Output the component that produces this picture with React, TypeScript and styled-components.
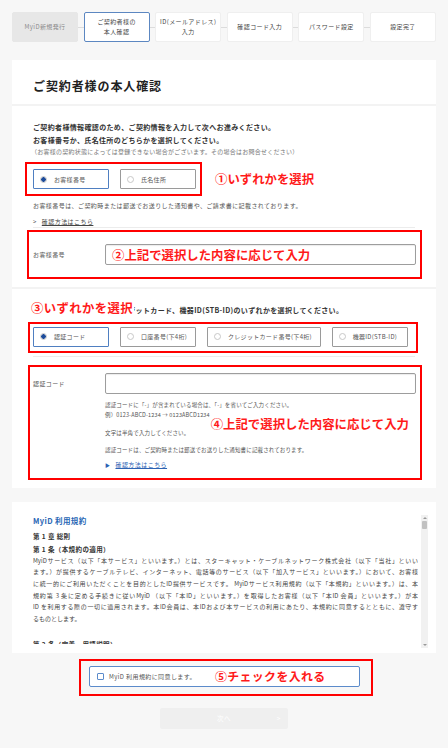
import React from "react";
import styled, { createGlobalStyle } from "styled-components";

const GlobalStyle = createGlobalStyle`
  html, body { margin: 0; padding: 0; background: #f7f7f7; }
  body {
    font-family: "Noto Sans CJK JP", "Noto Sans", sans-serif;
    color: #333;
    -webkit-font-smoothing: antialiased;
  }
  * { box-sizing: border-box; }
`;

const Page = styled.div`
  width: 448px;
  padding: 12px 12px 20px;
`;

/* ---------- stepper ---------- */

const Stepper = styled.ol`
  display: flex;
  align-items: center;
  height: 30px;
  margin: 0;
  padding: 0;
  list-style: none;
`;

type StepState = "done" | "current" | "todo";

const Step = styled.li<{ $state: StepState }>`
  flex: 1;
  height: 30px;
  display: flex;
  align-items: center;
  justify-content: center;
  text-align: center;
  font-size: 6px;
  line-height: 10.5px;
  letter-spacing: 0.4px;
  border-radius: 2px;
  background: ${(p) => (p.$state === "done" ? "#e7e7e7" : "#fff")};
  color: ${(p) => (p.$state === "done" ? "#8c8c8c" : "#444")};
  border: 1px solid
    ${(p) =>
      p.$state === "current" ? "#5c87c1" : p.$state === "done" ? "#e7e7e7" : "#efefef"};
`;

const Connector = styled.span`
  flex: none;
  width: 5.5px;
  height: 1px;
  background: #dcdcdc;
`;

/* ---------- main card ---------- */

const Card = styled.section`
  margin-top: 18px;
  background: #fff;
`;

const CardHeader = styled.header`
  height: 46px;
  padding: 18px 21px 0;
  border-bottom: 2px solid #f3f3f3;
`;

const Title = styled.h1`
  margin: 0;
  font-size: 12px;
  line-height: 16px;
  font-weight: 700;
  letter-spacing: 0.9px;
  color: #222;
`;

const Section = styled.div`
  padding: 15px 21px 8px;
  & + & {
    border-top: 2px solid #f3f3f3;
  }
`;

const Lead = styled.p`
  position: relative;
  margin: 0;
  font-size: 7px;
  line-height: 12.5px;
  font-weight: 700;
  letter-spacing: 0.35px;
  color: #333;
`;

const LeadNote = styled.p`
  margin: 0 0 0 -2px;
  font-size: 6px;
  line-height: 12px;
  letter-spacing: 0.25px;
  color: #777;
`;

const Note = styled.p`
  margin: 4px 0 0;
  font-size: 6px;
  line-height: 12px;
  letter-spacing: 0.43px;
  color: #555;
`;

const LinkRow = styled.a<{ $blue?: boolean; $top: number }>`
  display: flex;
  align-items: center;
  gap: 5px;
  margin-top: ${(p) => p.$top}px;
  font-size: 6px;
  line-height: 10px;
  letter-spacing: 0.45px;
  color: ${(p) => (p.$blue ? "#2c62b3" : "#444")};
  text-decoration: none;
  span:last-child {
    text-decoration: underline;
  }
`;

const Marker = styled.span<{ $blue?: boolean }>`
  font-size: ${(p) => (p.$blue ? "5px" : "6px")};
  color: ${(p) => (p.$blue ? "#2c62b3" : "#444")};
`;

const Rule = styled.hr<{ $top: number }>`
  margin: ${(p) => p.$top}px 0 0;
  border: 0;
  height: 1px;
  background: #ececec;
`;

/* ---------- red annotation frames ---------- */

const RedFrame = styled.div<{ $left: number; $right?: number; $top: number; $pad: string }>`
  position: relative;
  margin: ${(p) => p.$top}px ${(p) => -(p.$right ?? 0)}px 0 ${(p) => -p.$left}px;
  padding: ${(p) => p.$pad};
  border: 2px solid #ff0000;
`;

const AnnotRow = styled.div`
  display: flex;
  align-items: center;
  margin-top: 4px;
`;

const Annotation = styled.span<{ $size?: number }>`
  font-size: ${(p) => p.$size ?? 12.4}px;
  line-height: 18px;
  font-weight: 700;
  color: #ff1a1a;
  white-space: nowrap;
`;

const FloatingNote = styled(Annotation)<{ $x: number; $y: number; $cover?: boolean }>`
  position: absolute;
  left: ${(p) => p.$x}px;
  top: ${(p) => p.$y}px;
  pointer-events: none;
  background: ${(p) => (p.$cover ? "#fff" : "transparent")};
  padding-right: ${(p) => (p.$cover ? "1px" : "0")};
`;

/* ---------- radios ---------- */

const RadioGroup = styled.div`
  display: flex;
  gap: 11px;
`;

const RadioButton = styled.label<{ $checked?: boolean; $w: number }>`
  display: inline-flex;
  align-items: center;
  gap: 7px;
  width: ${(p) => p.$w}px;
  height: 20px;
  padding-left: 6px;
  background: #fff;
  border: ${(p) => (p.$checked ? "1.5px solid #4f7fc1" : "1px solid #9a9a9a")};
  border-radius: 1px;
  font-size: 6px;
  letter-spacing: 0.3px;
  color: #555;
  white-space: nowrap;
`;

const RadioDot = styled.span<{ $checked?: boolean }>`
  flex: none;
  width: 7px;
  height: 7px;
  border-radius: 50%;
  border: 1px solid #c8c8c8;
  background: ${(p) =>
    p.$checked ? "radial-gradient(circle, #1d4c9b 0 2.1px, #fff 2.6px)" : "#fff"};
`;

/* ---------- fields ---------- */

const FieldRow = styled.div`
  display: flex;
  align-items: flex-start;
`;

const FieldLabel = styled.span`
  flex: none;
  width: 72px;
  font-size: 6px;
  line-height: 21px;
  letter-spacing: 0.4px;
  color: #555;
`;

const FieldBody = styled.div`
  flex: 1;
  position: relative;
`;

const TextInput = styled.input`
  display: block;
  width: 100%;
  height: 21px;
  margin: 0;
  padding: 0 6px;
  border: 1px solid #9d9d9d;
  border-radius: 2px;
  box-shadow: inset 0 1px 1px rgba(0, 0, 0, 0.08);
  background: #fff;
  outline: none;
`;

const Hint = styled.p<{ $top: number }>`
  margin: ${(p) => p.$top}px 0 0;
  font-size: 5.5px;
  line-height: 9.5px;
  letter-spacing: 0.15px;
  color: #555;
`;

/* ---------- terms ---------- */

const TermsCard = styled.section`
  display: flex;
  gap: 3px;
  height: 151px;
  margin-top: 14px;
  padding: 13px 8px 0 21px;
  background: #fff;
`;

const TermsBody = styled.div`
  flex: 1;
  height: 129px;
  overflow: hidden;
`;

const TermsTitle = styled.h2`
  margin: 0;
  font-size: 7.5px;
  line-height: 12px;
  font-weight: 700;
  letter-spacing: 0.4px;
  color: #2766b4;
`;

const TermsHeading = styled.h3<{ $top: number }>`
  margin: ${(p) => p.$top}px 0 0;
  font-size: 6.5px;
  line-height: 12px;
  font-weight: 700;
  letter-spacing: 0.4px;
  color: #333;
`;

const TermsLine = styled.p<{ $last?: boolean }>`
  margin: 0;
  font-size: 6px;
  line-height: 11.7px;
  color: #444;
  white-space: nowrap;
  text-align: justify;
  text-align-last: ${(p) => (p.$last ? "left" : "justify")};
  text-justify: inter-character;
`;

const Blank = styled.div`
  height: 13px;
`;

const ScrollTrack = styled.div`
  flex: none;
  display: flex;
  flex-direction: column;
  align-items: center;
  width: 7px;
  height: 133px;
  background: #f1f1f1;
`;

const ScrollArrow = styled.span<{ $down?: boolean }>`
  width: 0;
  height: 0;
  margin: 2px 0;
  border-left: 2px solid transparent;
  border-right: 2px solid transparent;
  ${(p) => (p.$down ? "border-top: 2px solid #999;" : "border-bottom: 2px solid #999;")}
`;

const ScrollThumb = styled.span`
  width: 5px;
  height: 8px;
  margin-bottom: auto;
  border-radius: 1px;
  background: #c1c1c1;
`;

/* ---------- agree + next ---------- */

const AgreeFrame = styled(RedFrame)`
  width: 294px;
`;

const AgreeBox = styled.label`
  position: relative;
  display: flex;
  align-items: center;
  height: 21.5px;
  padding-left: 7px;
  background: #fff;
  border: 1.5px solid #5b8bcb;
  border-radius: 2px;
  font-size: 6px;
  letter-spacing: 0.4px;
  color: #555;
`;

const CheckSquare = styled.span`
  flex: none;
  width: 7px;
  height: 7px;
  margin-right: 5px;
  border: 1px solid #5b8bcb;
  border-radius: 1px;
  background: #fff;
`;

const NextButton = styled.button`
  position: relative;
  display: block;
  width: 128px;
  height: 21px;
  margin: 11.5px auto 0;
  padding: 0;
  border: 0;
  border-radius: 2px;
  background: #efefef;
  color: #fff;
  font-family: inherit;
  font-size: 6.5px;
  letter-spacing: 0.6px;
  span {
    position: absolute;
    right: 7px;
    top: 50%;
    transform: translateY(-50%);
  }
`;

const steps: { label: React.ReactNode; state: StepState }[] = [
  { label: "MyiD新規発行", state: "done" },
  { label: <>ご契約者様の<br />本人確認</>, state: "current" },
  { label: <>ID(メールアドレス)<br />入力</>, state: "todo" },
  { label: "確認コード入力", state: "todo" },
  { label: "パスワード設定", state: "todo" },
  { label: "設定完了", state: "todo" },
];

const methods = [
  { label: "認証コード", w: 76, checked: true },
  { label: "口座番号(下4桁)", w: 76 },
  { label: "クレジットカード番号(下4桁)", w: 113.7 },
  { label: "機器ID(STB-ID)", w: 76 },
];

const termsLines = [
  "MyiDサービス（以下「本サービス」といいます。）とは、スターキャット・ケーブルネットワーク株式会社（以下「当社」といい",
  "ます。）が提供するケーブルテレビ、インターネット、電話等のサービス（以下「加入サービス」といいます。）において、お客様",
  "に統一的にご利用いただくことを目的としたID提供サービスです。 MyiDサービス利用規約（以下「本規約」といいます。）は、本",
  "規約第 3 条に定める手続きに従いMyiD （以下「本ID」といいます。）を取得したお客様（以下「本ID 会員」といいます。）が本",
  "ID を利用する際の一切に適用されます。本ID会員は、本IDおよび本サービスの利用にあたり、本規約に同意するとともに、遵守す",
];

export default function App() {
  return (
    <>
      <GlobalStyle />
      <Page>
        <Stepper>
          {steps.map((s, i) => (
            <React.Fragment key={i}>
              {i > 0 && <Connector />}
              <Step $state={s.state}>{s.label}</Step>
            </React.Fragment>
          ))}
        </Stepper>

        <Card>
          <CardHeader>
            <Title>ご契約者様の本人確認</Title>
          </CardHeader>

          <Section>
            <Lead>ご契約者様情報確認のため、ご契約情報を入力して次へお進みください。</Lead>
            <Lead>お客様番号か、氏名住所のどちらかを選択してください。</Lead>
            <LeadNote>（お客様の契約状態によっては登録できない場合がございます。その場合はお問合せください）</LeadNote>

            <AnnotRow>
              <RedFrame $left={8} $top={0} $pad="5px 4px 5px 6px">
                <RadioGroup>
                  <RadioButton $checked $w={76}>
                    <RadioDot $checked />
                    お客様番号
                  </RadioButton>
                  <RadioButton $w={76}>
                    <RadioDot />
                    氏名住所
                  </RadioButton>
                </RadioGroup>
              </RedFrame>
              <Annotation style={{ marginLeft: 13 }}>①いずれかを選択</Annotation>
            </AnnotRow>

            <Note>お客様番号は、ご契約時または郵送でお送りした通知書や、ご請求書に記載されております。</Note>
            <LinkRow $top={5} href="#">
              <Marker>&gt;</Marker>
              <span>確認方法はこちら</span>
            </LinkRow>
            <Rule $top={0} />

            <RedFrame $left={6} $right={6.7} $top={2} $pad="12px 4px">
              <FieldRow>
                <FieldLabel>お客様番号</FieldLabel>
                <FieldBody>
                  <TextInput />
                  <FloatingNote $x={7} $y={1.5}>②上記で選択した内容に応じて入力</FloatingNote>
                </FieldBody>
              </FieldRow>
            </RedFrame>
          </Section>

          <Section>
            <Lead>
              認証コード、口座番号、クレジットカード、機器ID(STB-ID)のいずれかを選択してください。
              <FloatingNote $cover $x={-2} $y={-5}>③いずれかを選択</FloatingNote>
            </Lead>

            <RedFrame $left={5} $right={2.5} $top={5} $pad="3px 3px 4px">
              <RadioGroup>
                {methods.map((m) => (
                  <RadioButton key={m.label} $checked={m.checked} $w={m.w}>
                    <RadioDot $checked={m.checked} />
                    {m.label}
                  </RadioButton>
                ))}
              </RadioGroup>
            </RedFrame>
            <Rule $top={3} />

            <RedFrame $left={5} $right={6.7} $top={8} $pad="6px 4px 8px 3px">
              <FieldRow>
                <FieldLabel>認証コード</FieldLabel>
                <FieldBody>
                  <TextInput />
                  <Hint $top={7.5}>
                    認証コードに「-」が含まれている場合は、「-」を省いてご入力ください。
                    <br />
                    例）0123-ABCD-1234 → 0123ABCD1234
                  </Hint>
                  <Hint $top={8.5}>文字は半角で入力してください。</Hint>
                  <Hint $top={7.5}>認証コードは、ご契約時または郵送でお送りした通知書に記載されております。</Hint>
                  <LinkRow $blue $top={4.5} href="#">
                    <Marker $blue>▶</Marker>
                    <span>確認方法はこちら</span>
                  </LinkRow>
                </FieldBody>
              </FieldRow>
              <FloatingNote $x={180.7} $y={48.7}>④上記で選択した内容に応じて入力</FloatingNote>
            </RedFrame>
          </Section>
        </Card>

        <TermsCard>
          <TermsBody>
            <TermsTitle>MyiD 利用規約</TermsTitle>
            <TermsHeading $top={3}>第 1 章 総則</TermsHeading>
            <TermsHeading $top={1}>第 1 条（本規約の適用）</TermsHeading>
            {termsLines.map((l) => (
              <TermsLine key={l}>{l}</TermsLine>
            ))}
            <TermsLine $last>るものとします。</TermsLine>
            <Blank />
            <TermsHeading $top={0}>第 2 条（定義・用語説明）</TermsHeading>
          </TermsBody>
          <ScrollTrack>
            <ScrollArrow />
            <ScrollThumb />
            <ScrollArrow $down />
          </ScrollTrack>
        </TermsCard>

        <AgreeFrame $left={-67} $top={6} $pad="5px 11px 7px 8px">
          <AgreeBox>
            <CheckSquare />
            MyiD 利用規約に同意します。
            <Annotation $size={11.9} style={{ marginLeft: 19 }}>
              ⑤チェックを入れる
            </Annotation>
          </AgreeBox>
        </AgreeFrame>

        <NextButton disabled>
          次へ<span>&gt;</span>
        </NextButton>
      </Page>
    </>
  );
}
